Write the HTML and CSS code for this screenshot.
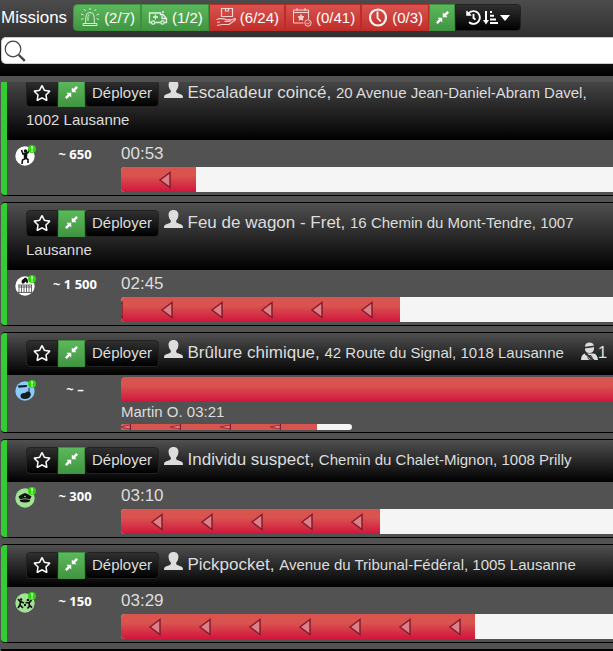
FILE: index.html
```html
<!DOCTYPE html>
<html lang="fr">
<head>
<meta charset="utf-8">
<title>Missions</title>
<link rel="stylesheet" href="styles.css">
</head>
<body>
<svg class="sprite" aria-hidden="true">
  <symbol id="star" viewBox="0 0 576 512"><path fill="currentColor" d="M528.1 171.5L382 150.2 316.7 17.8c-11.7-23.6-45.6-23.9-57.4 0L194 150.2 47.9 171.5c-26.2 3.8-36.7 36.1-17.7 54.6l105.7 103-25 145.5c-4.5 26.3 23.2 46 46.4 33.7L288 439.6l130.7 68.7c23.2 12.2 50.9-7.4 46.4-33.7l-25-145.5 105.7-103c19-18.5 8.5-50.8-17.7-54.6zM388.6 312.3l23.7 138.4L288 385.4l-124.3 65.3 23.7-138.4-100.6-98 139-20.2 62.2-126 62.2 126 139 20.2-100.6 98z"/></symbol>
  <symbol id="shrink" viewBox="0 0 14 14"><path fill="currentColor" d="M7.300 1.600 8.900 3.200 12.100 0 14 1.900 10.800 5.100 12.400 6.700H7.300ZM6.700 12.400 5.100 10.800 1.900 14 0 12.100 3.200 8.900 1.600 7.300H6.700Z"/></symbol>
  <symbol id="user" viewBox="0 0 19 18"><path fill="currentColor" d="M9.500 0c3.400 0 5.100 2.200 4.900 5.200-.1 2.200-1 4-2.200 5.300v1.200c0 .6.400 1 1 1.200l4 1.700c1.200.500 1.800 1.300 1.800 3.400H0c0-2.100.6-2.900 1.800-3.400l4-1.700c.6-.2 1-.6 1-1.200v-1.200C5.600 9.200 4.700 7.400 4.600 5.200 4.400 2.200 6.100 0 9.500 0Z"/></symbol>
  <symbol id="alert" viewBox="0 0 21 21"><circle cx="17" cy="4" r="4" fill="#2bd60b"/><path stroke="#fff" stroke-width="1.300" d="M17 1.300v3.300M17 5.500v1.300"/></symbol>
</svg>

<header class="top">
  <div class="bar">
    <h1>Missions</h1>
    <div class="group">
      <button class="btn green" type="button">
        <svg width="20" height="20" viewBox="0 0 20 20" fill="none" stroke="#fff" opacity=".8"><path d="M3 16.500h14v2H3zM5.500 16.500 6 9q.3-3.500 4-3.500T14 9l.5 7.500M8 14V9.500q0-1.500 1.500-1.700M10 3V1M5.500 4 4 2.200M14.500 4 16 2.200M3.500 8 1 7M16.500 8 19 7M3.500 11.500 1 12.500M16.500 11.500l2.500 1"/></svg>(2/7)</button>
      <button class="btn green" type="button">
        <svg width="20" height="20" viewBox="0 0 20 20" fill="none" stroke="#fff" stroke-width="1.300" opacity=".85"><path d="M3 15.500H1.500V6H12.500v1.500H15l3.500 4v4H16.500M7.500 15.500h5M14 8.500v3h4.500M7.500 7.500v5M5 10h5"/><circle cx="5.200" cy="15.500" r="1.700"/><circle cx="14.500" cy="15.500" r="1.700"/><path d="M14 5h2"/></svg>(1/2)</button>
      <button class="btn red" type="button">
        <svg width="20" height="20" viewBox="0 0 20 20" fill="none" stroke="#fff" stroke-width="1.200" opacity=".75"><path d="M5.500 1.500h11v8h-11zM9.500 1.500V4h3V1.500M.5 12.500l3.500-1 4 .3 2 1 4-.2q1 1-.5 1.700L8.500 14.500M14 13.500l5-2q1 .8-.5 1.900L13 17.500H6L1 18.500M1 15.500l3-.5"/></svg>(6/24)</button>
      <button class="btn red" type="button">
        <svg width="20" height="20" viewBox="0 0 20 20" fill="none" stroke="#fff" opacity=".75"><path d="M11.500 16H1.500V3h15v9M1.500 5.500h15M5 1v3M13 1v3"/><path fill="#fff" d="m9 7.500.9 1.900 2.100.3-1.500 1.400.4 2.100L9 12.200l-1.900 1 .4-2.100L6 9.700l2.100-.3z"/><circle cx="16" cy="16" r="3.200"/><path d="m14.500 16 1.200 1.200 2.200-2.300"/></svg>(0/41)</button>
      <button class="btn red" type="button">
        <svg width="20" height="20" viewBox="0 0 20 20" fill="none" stroke="#fff" stroke-width="2.200" opacity=".95"><circle cx="10" cy="10.500" r="8"/><path stroke-width="1.800" d="M9.500 4.500V11l3.300 3.500"/></svg>(0/3)</button>
      <button class="btn green" type="button" aria-label="Réduire tout"><svg width="13" height="13"><use href="#shrink"/></svg></button>
      <button class="btn dark sort" type="button" aria-label="Trier">
        <svg width="15" height="15" viewBox="0 0 512 512" fill="#fff"><path d="M504 255.531c.253 136.640-111.180 248.372-247.820 248.468-59.015.042-113.223-20.530-155.822-54.911-11.077-8.940-11.905-25.541-1.839-35.607l11.267-11.267c8.609-8.609 22.353-9.551 31.891-1.984C173.062 425.135 212.781 440 256 440c101.705 0 184-82.311 184-184 0-101.705-82.311-184-184-184-48.814 0-93.149 18.969-126.068 49.932l50.754 50.754c10.080 10.080 2.941 27.314-11.313 27.314H24c-8.837 0-16-7.163-16-16V38.627c0-14.254 17.234-21.393 27.314-11.314l49.372 49.372C129.209 34.136 189.552 8 256 8c136.810 0 247.747 110.781 248 247.531zm-180.912 78.784l9.823-12.630c8.138-10.463 6.253-25.542-4.210-33.679L288 256.349V152c0-13.255-10.745-24-24-24h-16c-13.255 0-24 10.745-24 24v135.651l65.409 50.874c10.463 8.137 25.541 6.253 33.679-4.210z"/></svg>
        <svg width="15" height="15" viewBox="0 0 15 15" fill="#fff"><path d="M2 1h2v9h2l-3 4.500L0 10h2zM7 1h2v2H7zM7 4.700h4v2H7zM7 8.400h6v2H7zM7 12h8v2H7z"/></svg>
        <svg width="10" height="6" viewBox="0 0 10 6"><path fill="#fff" d="M0 0h10L5 6z"/></svg>
      </button>
    </div>
  </div>
  <label class="search" aria-label="Rechercher">
    <svg width="22" height="22" viewBox="0 0 22 22" fill="none" stroke="#444"><circle cx="9" cy="9" r="7.800" stroke-width="1.200"/><path stroke-width="2.400" d="m14.800 15 6 5.800"/></svg>
    <input type="search">
  </label>
</header>

<main class="list">
  <article class="mission">
    <div class="head">
      <div class="group"><button class="btn dark icon" type="button" aria-label="Favori"><svg width="18" height="16"><use href="#star"/></svg></button><button class="btn green" type="button" aria-label="Réduire"><svg width="13" height="13"><use href="#shrink"/></svg></button><button class="btn dark" type="button">Déployer</button></div>
      <svg class="user" width="19" height="18"><use href="#user"/></svg>
      <a href="#">Escaladeur coincé, <small>20 Avenue Jean-Daniel-Abram Davel, 1002 Lausanne</small></a>
    </div>
    <div class="body">
      <svg class="pin" width="21" height="21" viewBox="0 0 21 21"><circle cx="10" cy="11" r="9.700" fill="#fff"/><path fill="none" stroke="#111" stroke-width="1.600" d="M6.500 5 8 9l5-1.500 1-3M10 9l.5 4.500L7.500 15 7 19M10.500 13l2.500 1.500V18"/><path fill="#111" d="m8.500 8 4-.5-.5 6.500H9z"/><circle cx="10.500" cy="6" r="1.700" fill="#111"/><use href="#alert"/></svg>
      <strong class="cost">~ 650</strong>
      <div class="progress"><time>00:53</time><div class="track"><div class="fill" style="width:75px;--shift:0px"></div></div></div>
    </div>
  </article>

  <article class="mission">
    <div class="head">
      <div class="group"><button class="btn dark icon" type="button" aria-label="Favori"><svg width="18" height="16"><use href="#star"/></svg></button><button class="btn green" type="button" aria-label="Réduire"><svg width="13" height="13"><use href="#shrink"/></svg></button><button class="btn dark" type="button">Déployer</button></div>
      <svg class="user" width="19" height="18"><use href="#user"/></svg>
      <a href="#">Feu de wagon - Fret, <small>16 Chemin du Mont-Tendre, 1007 Lausanne</small></a>
    </div>
    <div class="body">
      <svg class="pin" width="21" height="21" viewBox="0 0 21 21"><circle cx="10" cy="11" r="9.700" fill="#fff"/><path fill="none" stroke="#444" stroke-width=".8" d="M3 10h14M3.500 12h13M4 10v7.500M6.500 10v7.500M9 10v7.500M11.500 10v7.500M14 10v7.500M16.500 10v7.500M3 17.500h14"/><path fill="#111" d="M7 8.500q-1.500-3 1.500-4.500.5-1.500 2.500-1.500 2 1.500 2 4 0 1.500-1 2L10.500 6.500 9 8.500z"/><use href="#alert"/></svg>
      <strong class="cost">~ 1 500</strong>
      <div class="progress"><time>02:45</time><div class="track"><div class="fill" style="width:279px;--shift:2px"></div></div></div>
    </div>
  </article>

  <article class="mission">
    <div class="head">
      <div class="group"><button class="btn dark icon" type="button" aria-label="Favori"><svg width="18" height="16"><use href="#star"/></svg></button><button class="btn green" type="button" aria-label="Réduire"><svg width="13" height="13"><use href="#shrink"/></svg></button><button class="btn dark" type="button">Déployer</button></div>
      <svg class="user" width="19" height="18"><use href="#user"/></svg>
      <a href="#">Brûlure chimique, <small>42 Route du Signal, 1018 Lausanne</small></a>
      <span class="patients"><svg width="17" height="18" viewBox="0 0 17 18"><path fill="#ddd" d="M4 3.500Q5 .5 8.500.5T13 3.500L4.500 5zM4 6.500l9-1.500v2q-.5 4-4.500 4T4 7.500zM0 18q0-5.500 4-6.500l7 6.500zM6 11.500h6.500q4 .5 4.500 6.500h-3.500z"/><path fill="none" stroke="#333" d="m3.500 5.500 9.500-1M4 12l8 6"/><circle cx="9" cy="15.500" r="2" fill="none" stroke="#333"/></svg>1</span>
    </div>
    <div class="body patient-body">
      <svg class="pin" width="21" height="21" viewBox="0 0 21 21"><circle cx="10" cy="11" r="9.700" fill="#8ccaf8"/><path fill="#141c24" d="m3 5.500 9-.5-.3 2-8.200.7zM5.500 15.500q.5-3 4.500-2.500l2-1.500 3 .5 1 3-2 3q-4 2-8 0z"/><path stroke="#141c24" d="M14 8v4"/><use href="#alert"/></svg>
      <strong class="cost">~ –</strong>
      <div class="progress"><div class="track"><div class="fill plain"></div></div><span class="name">Martin O. 03:21</span><div class="track mini"><div class="fill" style="width:85%"></div></div></div>
    </div>
  </article>

  <article class="mission">
    <div class="head">
      <div class="group"><button class="btn dark icon" type="button" aria-label="Favori"><svg width="18" height="16"><use href="#star"/></svg></button><button class="btn green" type="button" aria-label="Réduire"><svg width="13" height="13"><use href="#shrink"/></svg></button><button class="btn dark" type="button">Déployer</button></div>
      <svg class="user" width="19" height="18"><use href="#user"/></svg>
      <a href="#">Individu suspect, <small>Chemin du Chalet-Mignon, 1008 Prilly</small></a>
    </div>
    <div class="body">
      <svg class="pin" width="21" height="21" viewBox="0 0 21 21"><circle cx="10" cy="11" r="9.700" fill="#a2e294"/><path fill="#111" d="M3.500 9.500 7 7.300 10 6l3 1.300 3.500 2.200-1.500 3q1 3-5 3t-5-3z"/><path fill="none" stroke="#a2e294" stroke-width=".7" d="M5 12.500q5-1.500 10 0"/><circle cx="10" cy="9.500" r=".8" fill="#a2e294"/><use href="#alert"/></svg>
      <strong class="cost">~ 300</strong>
      <div class="progress"><time>03:10</time><div class="track"><div class="fill" style="width:259px;--shift:-8px"></div></div></div>
    </div>
  </article>

  <article class="mission">
    <div class="head">
      <div class="group"><button class="btn dark icon" type="button" aria-label="Favori"><svg width="18" height="16"><use href="#star"/></svg></button><button class="btn green" type="button" aria-label="Réduire"><svg width="13" height="13"><use href="#shrink"/></svg></button><button class="btn dark" type="button">Déployer</button></div>
      <svg class="user" width="19" height="18"><use href="#user"/></svg>
      <a href="#">Pickpocket, <small>Avenue du Tribunal-Fédéral, 1005 Lausanne</small></a>
    </div>
    <div class="body">
      <svg class="pin" width="21" height="21" viewBox="0 0 21 21"><circle cx="10" cy="11" r="9.700" fill="#a2e294"/><path fill="none" stroke="#111" stroke-width="1.700" d="m3 7 2.500 3L5 13l-2 3M5.500 9.500 9 11M5 13l3 3M16.500 8 14 11l.5 3-2 2.500M14 11l-3.500-.5M14.500 13.500l2.500 2"/><circle cx="6" cy="7.500" r="1.300" fill="#111"/><circle cx="13" cy="8" r="1.300" fill="#111"/><circle cx="10" cy="13" r="1.200" fill="#111"/><use href="#alert"/></svg>
      <strong class="cost">~ 150</strong>
      <div class="progress"><time>03:29</time><div class="track"><div class="fill" style="width:354px;--shift:-10px"></div></div></div>
    </div>
  </article>

  <article class="mission waiting"></article>
</main>
</body>
</html>
```
FILE: styles.css
```css
* { box-sizing: border-box; }

body {
  margin: 0;
  height: 100vh;
  display: flex;
  flex-direction: column;
  overflow: hidden;
  background: #525252;
  color: #ddd;
  font: 15px/25px "Liberation Sans", Arial, sans-serif;
}

.sprite { position: absolute; width: 0; height: 0; }
svg { flex: none; }

.top {
  padding: 4px 0 12px 1px;
  margin-bottom: 6px;
  background: linear-gradient(#4c4c4c, #303030 37px, #101010 62px, #000);
}

.bar { display: flex; align-items: center; gap: 6px; margin-bottom: 6px; }

h1 {
  margin: 0;
  color: #fff;
  font-size: 17px;
  font-weight: 400;
  line-height: 25px;
}

.group { display: inline-flex; }

.btn {
  display: inline-flex;
  align-items: center;
  gap: 4px;
  height: 27px;
  margin: 0;
  padding: 0 6px 1px;
  border: 1px solid #222;
  color: #fff;
  font: inherit;
  white-space: nowrap;
}

.btn:first-child { border-radius: 4px 0 0 4px; }
.btn:last-child { border-radius: 0 4px 4px 0; }
.green { border-color: #3e8f3e; background: linear-gradient(#5cb85c, #419641); }
.red { border-color: #b92c28; background: linear-gradient(#d9534f, #c12e2a); }
.dark { background: linear-gradient(#303030, #000); color: #ddd; }
.top .btn { padding: 0 5px 1px 6px; }
.top .sort { gap: 2px; padding: 0 10px; }

.search {
  display: flex;
  align-items: center;
  height: 27px;
  padding-left: 2px;
  border: 1px solid #ccc;
  border-right: 0;
  border-radius: 5px 0 0 5px;
  background: #fff;
}

.search input {
  flex: 1;
  min-width: 0;
  border: 0;
  outline: 0;
  background: none;
  font: inherit;
}

.list { flex: 1; min-height: 0; overflow: hidden; }

.mission {
  margin: 0 0 6px 1px;
  border: solid #000;
  border-width: 1px 0;
  border-radius: 4px 0 0 4px;
  position: relative;
  padding-left: 6px;
}

.mission::before {
  content: "";
  position: absolute;
  inset: 0 auto 0 0;
  width: 6px;
  border-radius: 4px 0 0 4px;
  background: #32cd32;
}

.mission:first-child { margin-top: -10px; }
.waiting::before { background: #c9302c; }

.head {
  padding: 7px 2px 8px 19px;
  background: linear-gradient(#505050, #000);
  font-size: 17px;
}

.head .group { vertical-align: top; }
.head .btn { font-size: 15px; padding-bottom: 2px; }
.head .dark { border-radius: 4px; }
.head .icon { border-radius: 4px 0 0 4px; color: #fff; }
.head a { color: inherit; text-decoration: none; }
.head small { font-size: 15px; }
.user { color: #ddd; }
.patients { margin-left: 12px; white-space: nowrap; }
.patients svg { vertical-align: -2px; }

.body {
  display: grid;
  grid-template-columns: 22px 76px 1fr;
  padding: 0 0 3px 8px;
}

.pin { margin-top: 5px; }

.cost {
  margin-top: 5px;
  color: #fff;
  font: bold 13px/19px "Noto Sans", sans-serif;
  text-align: center;
}

.progress { padding-left: 8px; min-width: 0; }
.progress time { display: block; height: 27px; font-size: 17px; line-height: 27px; }

.track {
  height: 25px;
  overflow: hidden;
  border-radius: 4px 0 0 4px;
  background: #f5f5f5;
}

.fill {
  height: 100%;
  background:
    url("data:image/svg+xml,%3Csvg xmlns='http://www.w3.org/2000/svg' width='50' height='25'%3E%3Cpath d='M39 13 49 5.500V20.500Z' fill='%23dd8089' stroke='%23851a2c' stroke-width='1.500'/%3E%3C/svg%3E") var(--shift) center repeat-x,
    linear-gradient(#d9534f 35%, #d2143c);
}

.plain { background: linear-gradient(#d9534f 35%, #d2143c); }

.patient-body { padding-top: 2px; padding-bottom: 2px; }
.patient-body .pin { margin-top: 3px; }
.patient-body .cost { margin-top: 3px; }
.name { display: block; height: 22px; line-height: 20px; }
.mini { width: 231px; height: 6px; border-radius: 3px; }

.mini .fill {
  background:
    url("data:image/svg+xml,%3Csvg xmlns='http://www.w3.org/2000/svg' width='50' height='6'%3E%3Cpath d='M39 3 49 1V5Z' fill='%23dd8089' stroke='%23a03038'/%3E%3Cpath d='M49.500 0V6' stroke='%23851a2c'/%3E%3C/svg%3E") 10px 0 repeat-x,
    #d9534f;
}
```
